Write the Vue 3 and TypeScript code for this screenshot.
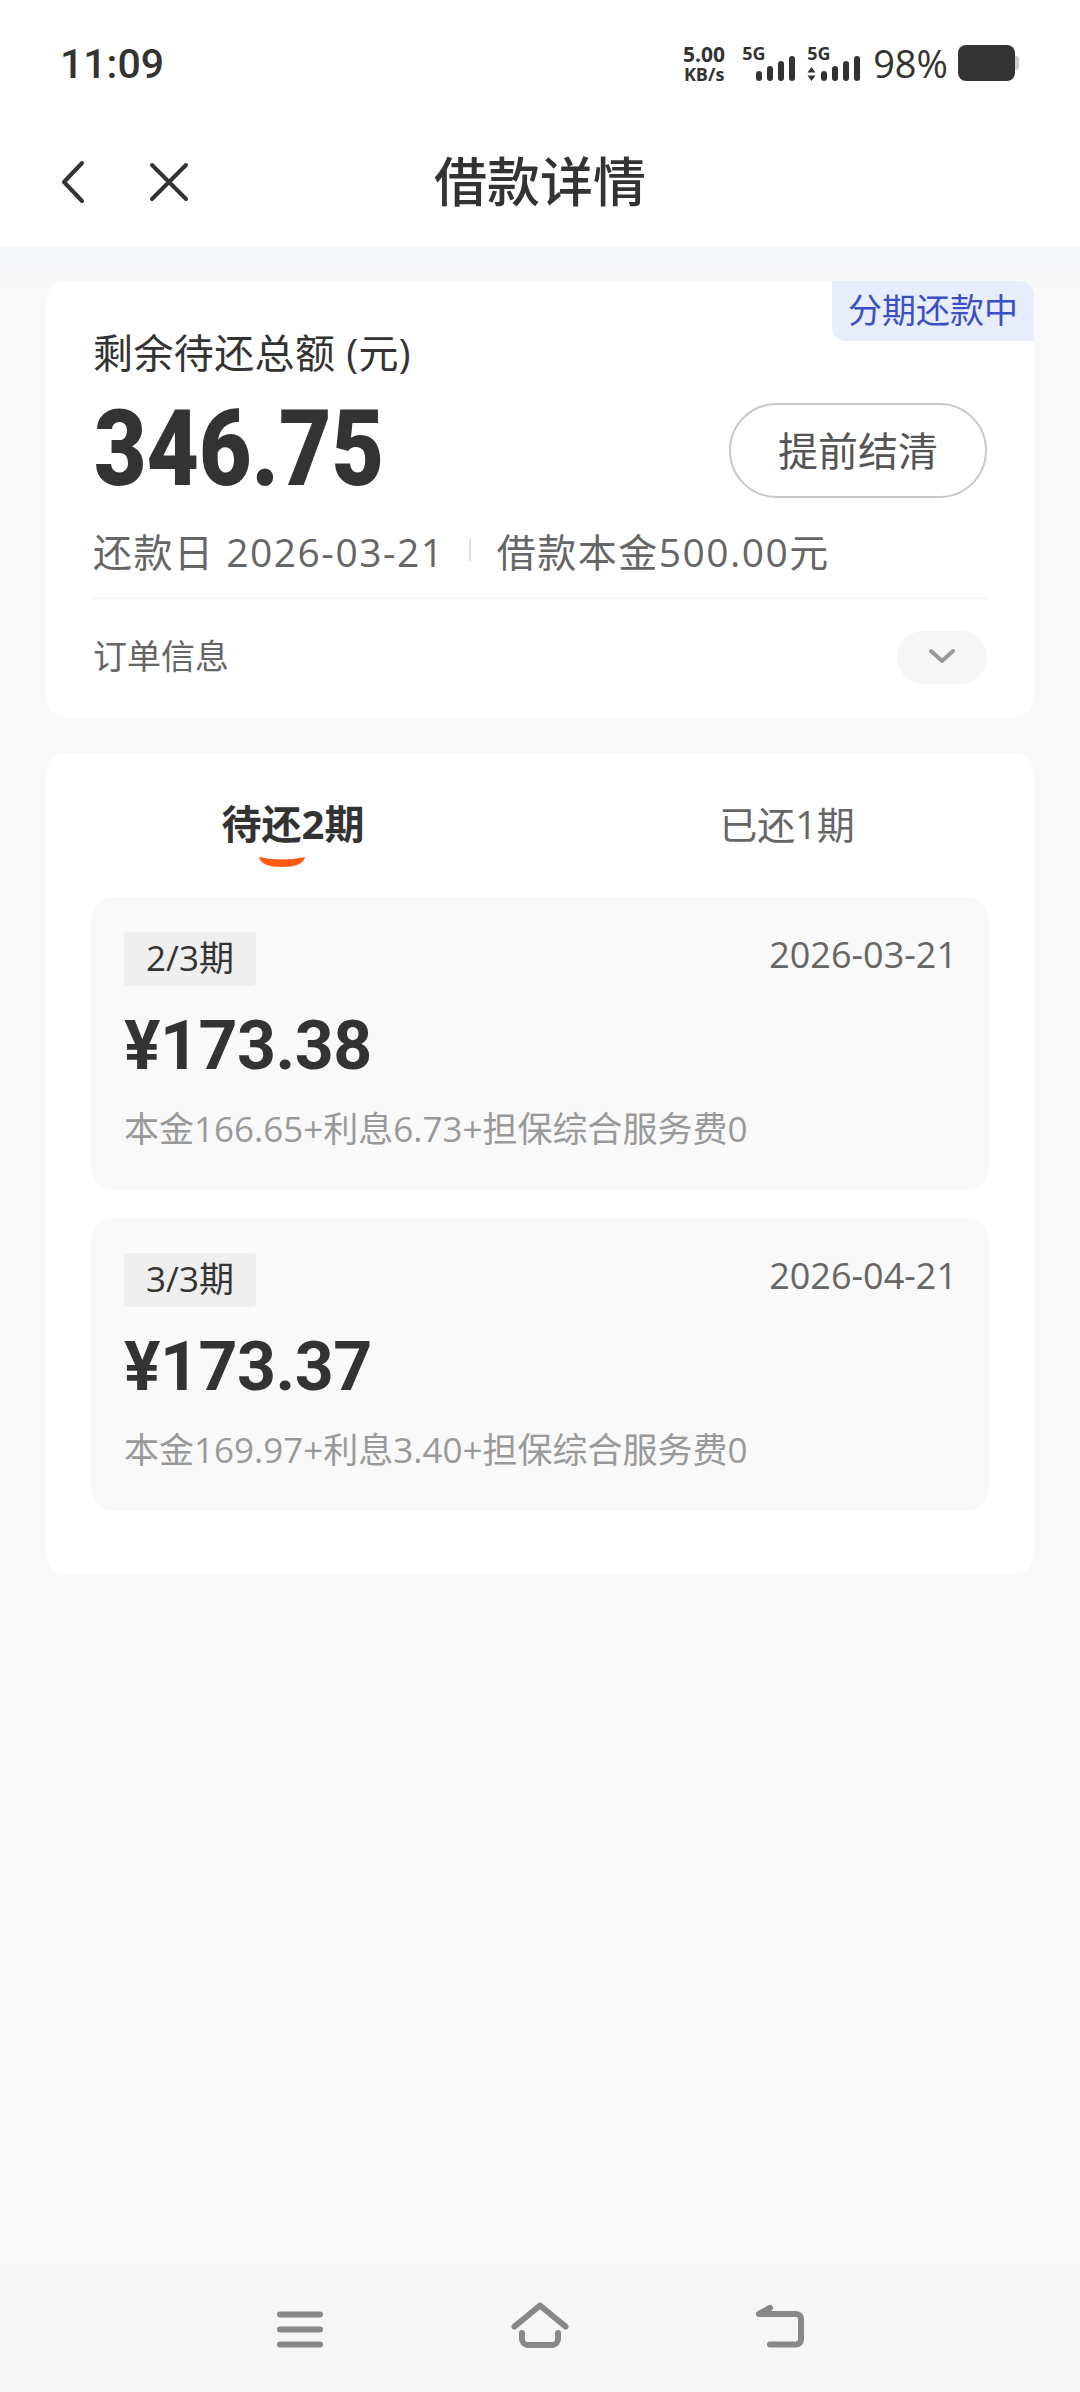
<template>
  <div class="page">
    <div class="status-bar">
      <span class="time">11:09</span>
      <div class="status-right">
        <div class="speed"><b>5.00</b><b class="unit">KB/s</b></div>
        <div class="signal">
          <b class="five-g">5G</b>
          <div class="bars">
            <i v-for="h in barHeights" :key="h" :style="{ height: h + 'px' }"></i>
          </div>
        </div>
        <div class="signal second">
          <b class="five-g">5G</b>
          <div class="bars">
            <svg class="arrows" width="9" height="14" viewBox="0 0 9 14">
              <path d="M4.5 0 L8.5 5.5 H.5 Z M.5 8.5 H8.5 L4.5 14 Z" fill="#333" />
            </svg>
            <i v-for="h in barHeights" :key="h" :style="{ height: h + 'px' }"></i>
          </div>
        </div>
        <span class="percent">98%</span>
        <div class="battery"><span class="battery-nub"></span></div>
      </div>
    </div>

    <div class="nav">
      <div class="nav-left">
        <svg width="24" height="44" viewBox="0 0 24 44" fill="none" stroke="#333" stroke-width="4" stroke-linecap="round" stroke-linejoin="round">
          <path d="M21 3 L3 22 L21 41" />
        </svg>
        <svg class="close" width="40" height="40" viewBox="0 0 40 40" fill="none" stroke="#333" stroke-width="4" stroke-linecap="round">
          <path d="M3 3 L37 37 M37 3 L3 37" />
        </svg>
      </div>
      <div class="title">借款详情</div>
    </div>

    <div class="main">
      <section class="card summary">
        <div class="badge">分期还款中</div>
        <div class="label">剩余待还总额 (元)</div>
        <div class="amount-row">
          <span class="amount">346.75</span>
          <button class="settle">提前结清</button>
        </div>
        <div class="meta">
          <span>还款日 2026-03-21</span>
          <i class="sep"></i>
          <span>借款本金500.00元</span>
        </div>
        <div class="divider"></div>
        <div class="order-row">
          <span>订单信息</span>
          <span class="expand">
            <svg width="28" height="16" viewBox="0 0 28 16" fill="none" stroke="#999" stroke-width="4" stroke-linecap="round" stroke-linejoin="round">
              <path d="M3 3 L14 13 L25 3" />
            </svg>
          </span>
        </div>
      </section>

      <section class="card plans">
        <div class="tabs">
          <div class="tab active">
            <span class="tab-text">待还2期</span>
            <svg class="smile" width="46" height="11" viewBox="0 0 46 11">
              <path d="M0 1 Q23 6 46 1 Q44 11 23 11 Q2 11 0 1 Z" fill="#ff5a10" />
            </svg>
          </div>
          <div class="tab">
            <span class="tab-text">已还1期</span>
          </div>
        </div>
        <div class="plan-list">
          <div v-for="plan in plans" :key="plan.term" class="plan">
            <div class="plan-head">
              <span class="chip">{{ plan.term }}</span>
              <span class="plan-date">{{ plan.date }}</span>
            </div>
            <div class="plan-amount">{{ plan.amount }}</div>
            <div class="plan-detail">{{ plan.detail }}</div>
          </div>
        </div>
      </section>
    </div>

    <div class="bottom-bar">
      <div class="bottom-cell">
        <svg width="60" height="60" viewBox="0 0 60 60" fill="none" stroke="#888" stroke-width="6" stroke-linecap="round">
          <path d="M10 15.5 H50 M10 30.5 H50 M10 45.5 H50" />
        </svg>
      </div>
      <div class="bottom-cell">
        <svg width="60" height="60" viewBox="0 0 60 60" fill="none" stroke="#888" stroke-width="6" stroke-linecap="round" stroke-linejoin="round">
          <path d="M4.5 27.5 L30 6.5 L55.5 27.5" />
          <path d="M12 34 V40 a6 6 0 0 0 6 6 H42 a6 6 0 0 0 6 -6 V34" />
        </svg>
      </div>
      <div class="bottom-cell">
        <svg width="60" height="60" viewBox="0 0 60 60" fill="none" stroke="#888" stroke-width="6" stroke-linecap="round" stroke-linejoin="round">
          <path d="M20 9 L9 15 H46 a5 5 0 0 1 5 5 V40.5 a5 5 0 0 1 -5 5 H20" />
        </svg>
      </div>
    </div>
  </div>
</template>

<script setup lang="ts">
interface Plan {
  term: string;
  date: string;
  amount: string;
  detail: string;
}

const barHeights = [10, 15, 20, 25];

const plans: Plan[] = [
  {
    term: '2/3期',
    date: '2026-03-21',
    amount: '¥173.38',
    detail: '本金166.65+利息6.73+担保综合服务费0',
  },
  {
    term: '3/3期',
    date: '2026-04-21',
    amount: '¥173.37',
    detail: '本金169.97+利息3.40+担保综合服务费0',
  },
];
</script>

<style>
html,
body {
  margin: 0;
  background: #f9f9f9;
}
</style>

<style scoped>
.page {
  display: flex;
  flex-direction: column;
  width: 1080px;
  height: 2392px;
  overflow: hidden;
  background: #f9f9f9;
  color: #333;
  font-family: "Open Sans", "Noto Sans CJK SC", sans-serif;
}

.status-bar {
  display: flex;
  align-items: center;
  justify-content: space-between;
  height: 126px;
  padding: 0 65px 0 60px;
  background: #fff;
  box-sizing: border-box;
}

.time {
  margin-top: 2px;
  font-family: Roboto, sans-serif;
  font-size: 41px;
  font-weight: 500;
}

.status-right {
  display: flex;
  align-items: center;
  height: 36px;
}

.speed {
  display: flex;
  flex-direction: column;
  align-items: center;
  width: 46px;
  font-size: 21px;
  line-height: 21px;
}

.unit {
  font-size: 18px;
  line-height: 18px;
}

.signal {
  position: relative;
  width: 53px;
  height: 36px;
  margin-left: 15px;
}

.signal.second {
  width: 53px;
  margin-left: 12px;
}

.five-g {
  position: absolute;
  top: 0;
  left: 0;
  font-size: 18px;
  line-height: 16px;
}

.bars {
  position: absolute;
  right: 0;
  bottom: 0;
  display: flex;
  align-items: flex-end;
  gap: 5px;
}

.bars i {
  display: block;
  width: 6px;
  border-radius: 3px;
  background: #333;
}

.percent {
  margin-left: 13px;
  font-size: 38px;
  font-weight: 500;
}

.battery {
  position: relative;
  width: 57px;
  height: 36px;
  margin-left: 10px;
  border-radius: 8px;
  background: #333;
}

.battery-nub {
  position: absolute;
  top: 11px;
  left: 57px;
  width: 4px;
  height: 14px;
  border-radius: 0 3px 3px 0;
  background: #ccc;
}

.nav {
  position: relative;
  height: 121px;
  padding-bottom: 9px;
  background: #fff;
  box-sizing: border-box;
  display: grid;
  grid-template-columns: 1fr auto 1fr;
  align-items: center;
}

.nav-left {
  display: flex;
  align-items: center;
  padding-left: 61px;
}

.close {
  margin-left: 64px;
}

.title {
  margin-top: -5px;
  font-size: 53px;
  font-weight: 500;
}

.main {
  padding: 34px 46px 0;
  background: linear-gradient(#f6f8fd, #f9f9f9 40px);
}

.card {
  border-radius: 20px;
  background: #fff;
}

.summary {
  position: relative;
  height: 436px;
  padding: 48px 47px 0;
  box-sizing: border-box;
}

.badge {
  position: absolute;
  top: 0;
  right: 0;
  width: 202px;
  height: 60px;
  border-radius: 0 14px 0 14px;
  background: #e8edfb;
  color: #3b50c4;
  font-size: 34px;
  line-height: 58px;
  text-align: center;
}

.label {
  font-size: 40px;
  line-height: 48px;
  letter-spacing: 0.4px;
}

.amount-row {
  display: flex;
  align-items: center;
  justify-content: space-between;
  height: 95px;
  margin-top: 26px;
}

.amount {
  margin: -2px 0 0 1px;
  font-family: Roboto, sans-serif;
  font-size: 106px;
  font-weight: 900;
  line-height: 95px;
  transform: scaleX(0.855);
  transform-origin: left center;
}

.settle {
  width: 258px;
  height: 95px;
  padding: 0 0 4px;
  border: 2px solid #c8c8c8;
  border-radius: 48px;
  background: #fff;
  color: #555;
  font-family: inherit;
  font-size: 40px;
}

.meta {
  display: flex;
  align-items: center;
  height: 48px;
  margin-top: 28px;
  color: #666;
  font-size: 39px;
  letter-spacing: 1.5px;
}

.sep {
  width: 2px;
  height: 22px;
  margin: 0 26px 0 24px;
  background: #ddd;
}

.divider {
  height: 1px;
  margin-top: 24px;
  background: #eee;
}

.order-row {
  display: flex;
  align-items: center;
  justify-content: space-between;
  height: 53px;
  margin-top: 32px;
  color: #666;
  font-size: 34px;
}

.order-row > span:first-child {
  margin-top: -7px;
}

.expand {
  display: flex;
  align-items: center;
  justify-content: center;
  width: 90px;
  height: 53px;
  padding-bottom: 4px;
  border-radius: 27px;
  background: #f6f6f6;
  box-sizing: border-box;
}

.plans {
  height: 821px;
  margin-top: 36px;
}

.tabs {
  display: grid;
  grid-template-columns: 1fr 1fr;
  height: 144px;
  padding-top: 47px;
  box-sizing: border-box;
}

.tab {
  text-align: center;
  color: #666;
  font-size: 38px;
  line-height: 48px;
}

.tab-text {
  position: relative;
}

.tab.active {
  position: relative;
  color: #333;
  font-size: 40px;
  font-weight: 700;
}

.smile {
  position: absolute;
  top: 56px;
  left: 213px;
}

.plan-list {
  display: flex;
  flex-direction: column;
  gap: 28px;
  padding: 0 44px;
}

.plan {
  height: 293px;
  padding: 35px 33px 0 34px;
  border-radius: 24px;
  background: #f9f9f9;
  box-sizing: border-box;
}

.plan-head {
  display: flex;
  align-items: flex-start;
  justify-content: space-between;
}

.chip {
  width: 132px;
  height: 54px;
  border-radius: 4px;
  background: #efefef;
  font-size: 35px;
  line-height: 51px;
  text-align: center;
}

.plan-date {
  color: #666;
  font-size: 36px;
  line-height: 46px;
}

.plan-amount {
  margin-top: 20px;
  font-family: Roboto, sans-serif;
  font-size: 68px;
  font-weight: 700;
  line-height: 80px;
  letter-spacing: -0.5px;
}

.plan-detail {
  margin-top: 19px;
  color: #999;
  font-size: 35px;
  line-height: 48px;
}

.bottom-bar {
  display: flex;
  justify-content: center;
  align-items: center;
  height: 127px;
  margin-top: auto;
  background: #f6f6f6;
}

.bottom-cell {
  display: flex;
  justify-content: center;
  width: 240px;
}
</style>
